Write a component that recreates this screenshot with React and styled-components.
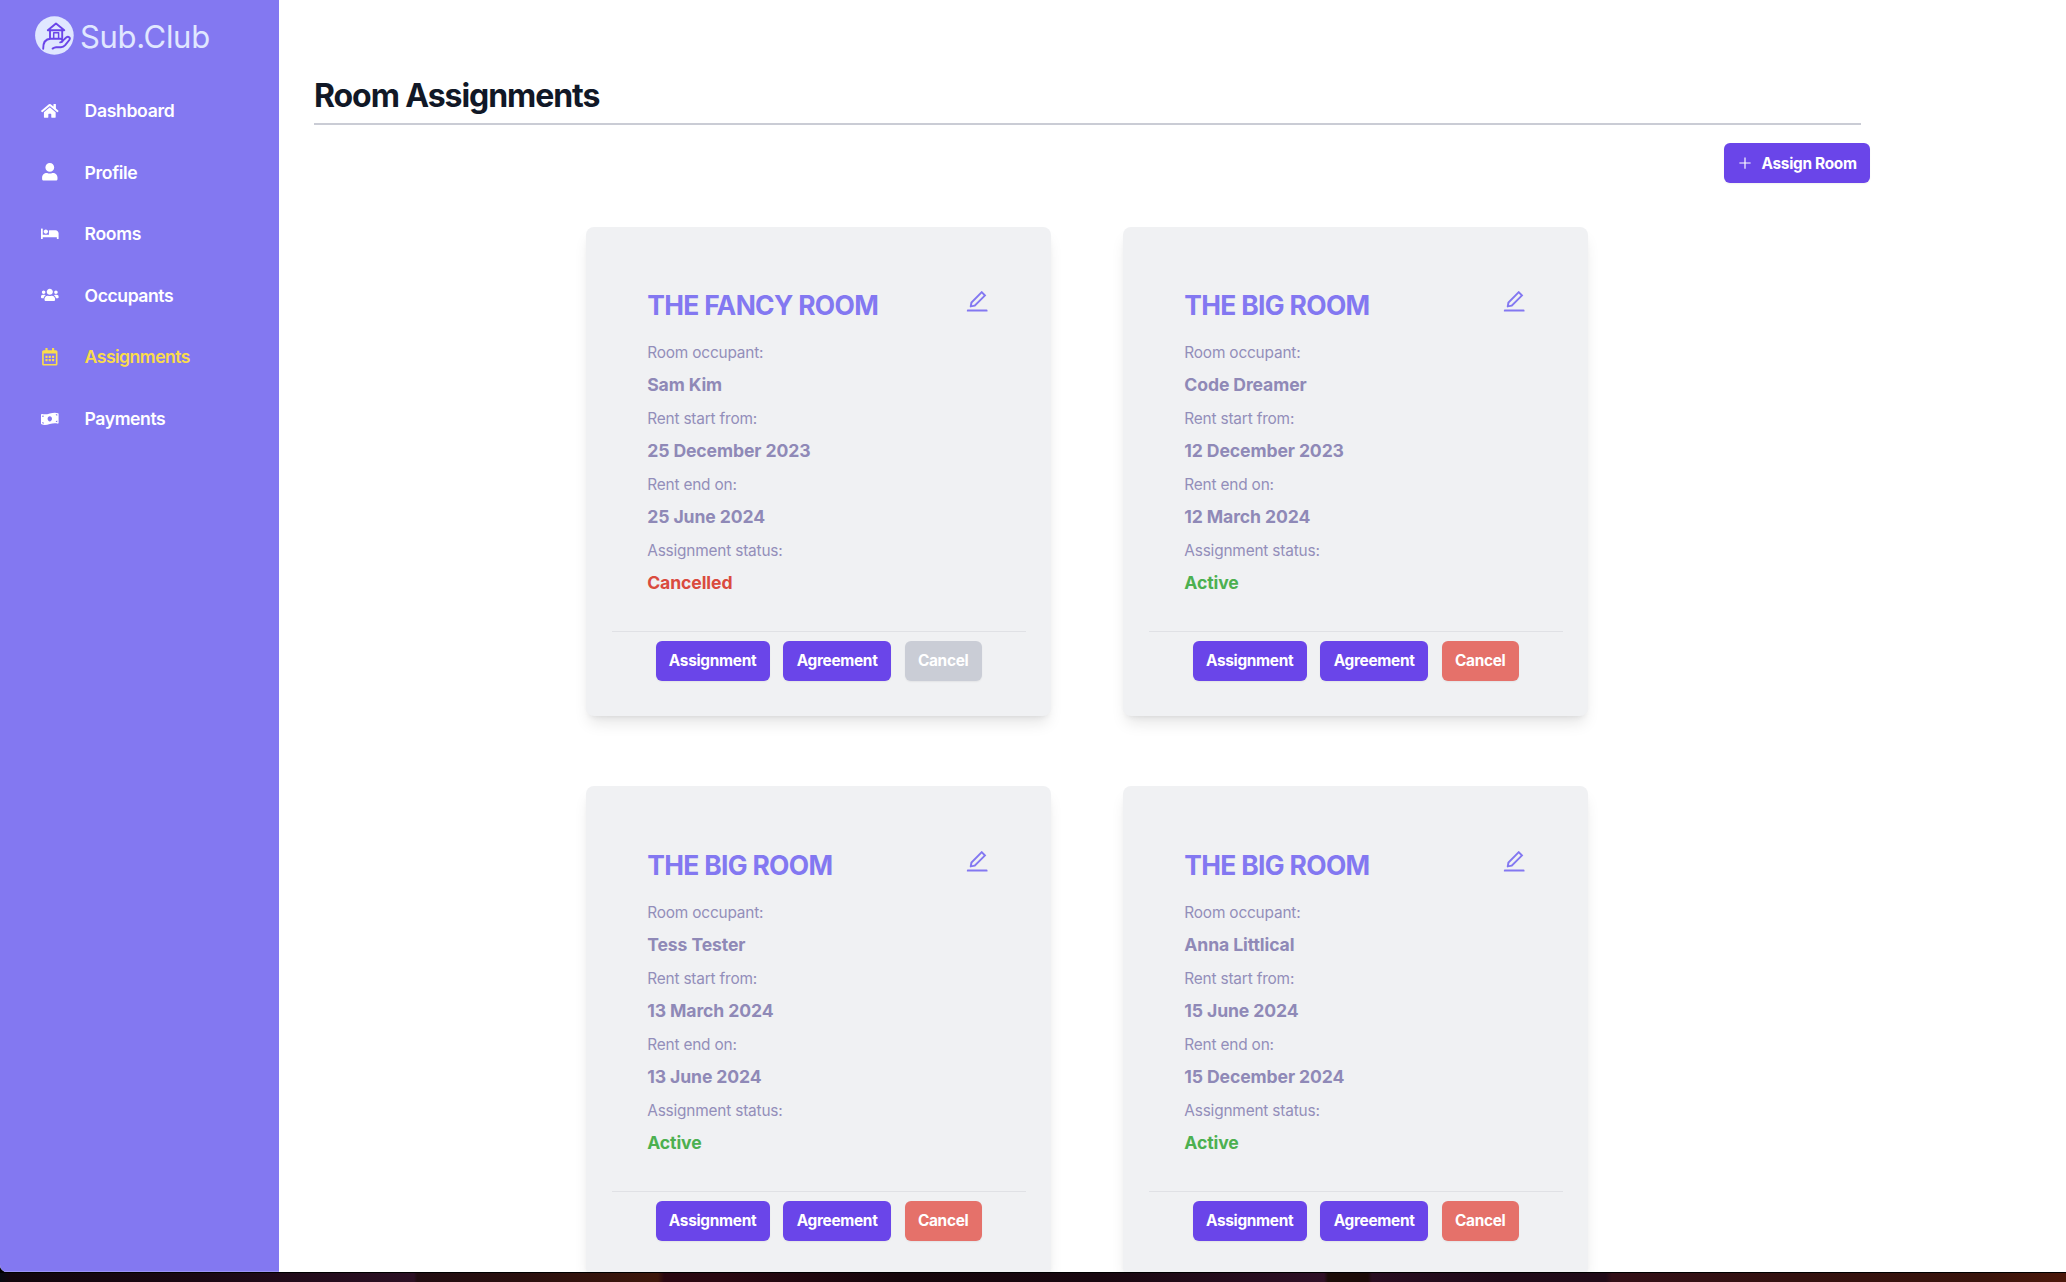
import React from 'react';
import styled, { createGlobalStyle } from 'styled-components';
import { FaHome, FaUser, FaBed, FaUsers, FaRegCalendarAlt, FaMoneyBillWave } from 'react-icons/fa';
import { AiOutlineEdit, AiOutlinePlus } from 'react-icons/ai';

const GlobalStyle = createGlobalStyle`
  *, *::before, *::after { box-sizing: border-box; }
  body { margin: 0; overflow: hidden; background: #000; font-family: Inter, 'Liberation Sans', sans-serif; }
  h1, h2, p, ul { margin: 0; padding: 0; }
`;

const Screen = styled.div`
  height: 1282px;
  display: flex;
  flex-direction: column;
  background: #000;
`;

const Window = styled.div`
  height: 1272px;
  flex: none;
  display: flex;
  overflow: hidden;
  background: #fff;
  border-bottom-left-radius: 7px;
`;

const Desktop = styled.div`
  flex: 1;
  margin-top: 1px;
  background: linear-gradient(
    90deg,
    #060a10 0, #12060c 10px, #1a0813 200px, #2c1024 414px,
    #220d12 417px, #2a0f0e 520px, #3e170b 658px,
    #2a0710 664px, #2a0811 720px, #16060b 900px, #18070f 1100px, #2f1026 1324px,
    #1c0c08 1328px, #1c0a08 1368px,
    #280d20 1372px, #200a18 1500px, #210b18 1606px,
    #330f17 1612px, #34110f 1800px, #3a140c 1980px, #4c180b 2066px
  );
`;

const Sidebar = styled.aside`
  width: 279px;
  flex: none;
  background: #8378f1;
  border-bottom: 1px solid #9d94f5;
`;

const Logo = styled.div`
  height: 79.7px;
  padding: 16px 0 0 35px;
  display: flex;
  align-items: flex-start;
  gap: 6px;
  color: #e0e7ff;

  svg { display: block; flex: none; }
`;

const LogoName = styled.span`
  padding-top: 1px;
  font-size: 31px;
  font-weight: 400;
  letter-spacing: -0.3px;
  line-height: 40px;
`;

const NavItem = styled.li`
  height: 61.6px;
  padding-left: 41px;
  display: flex;
  align-items: center;
  gap: 26px;
  list-style: none;
  color: ${({ $active }) => ($active ? '#fadc4b' : '#fff')};
  font-size: 17.6px;
  font-weight: 600;
  letter-spacing: ${({ $spacing }) => $spacing}px;

  svg { flex: none; }
`;

const Main = styled.main`
  flex: 1;
  padding-left: 35px;
`;

const PageHeader = styled.header`
  width: 1547px;
  height: 125px;
  padding-top: 75px;
  border-bottom: 2px solid #caccd5;
`;

const PageTitle = styled.h1`
  font-size: 32px;
  font-weight: 700;
  line-height: 42px;
  letter-spacing: -1.07px;
  color: #111827;
`;

const Toolbar = styled.div`
  width: 1556px;
  padding-top: 18px;
  display: flex;
  justify-content: flex-end;
`;

const BUTTON_COLORS = { primary: '#6a45e9', danger: '#e5716a', disabled: '#cacdd6' };

const Button = styled.button`
  height: 40px;
  padding: 0 13.3px;
  display: inline-flex;
  align-items: center;
  gap: 8.4px;
  border: 0;
  border-radius: 6px;
  background: ${({ $tone }) => BUTTON_COLORS[$tone]};
  color: #fff;
  font-family: inherit;
  font-size: 15.4px;
  font-weight: 700;
  letter-spacing: -0.3px;
  box-shadow: 0 1px 2px rgba(0, 0, 0, 0.06);
`;

const CardGrid = styled.section`
  padding: 43.6px 0 0 271.8px;
  display: grid;
  grid-template-columns: 465.6px 465.6px;
  gap: 70.7px 71.5px;
`;

const Card = styled.article`
  height: 489px;
  border-radius: 8px;
  background: #f0f1f3;
  box-shadow: 0 10px 15px -3px rgba(0, 0, 0, 0.1), 0 4px 6px -4px rgba(0, 0, 0, 0.1);
`;

const CardBody = styled.div`
  padding: 61.4px 61.4px 0;
`;

const CardHead = styled.div`
  height: 48px;
  display: flex;
  justify-content: space-between;
  align-items: flex-start;
  color: #8378f1;
`;

const RoomName = styled.h2`
  font-size: 26.4px;
  font-weight: 700;
  line-height: 34px;
  letter-spacing: -0.66px;
  text-transform: uppercase;
`;

const Label = styled.p`
  font-size: 15.4px;
  line-height: 33px;
  letter-spacing: -0.18px;
  color: #938eba;
`;

const STATUS_COLORS = { Active: '#4cb050', Cancelled: '#da4b3e' };

const Value = styled.p`
  margin-bottom: 2px;
  font-size: 17.6px;
  font-weight: 700;
  line-height: 31px;
  letter-spacing: -0.1px;
  color: ${({ $status }) => STATUS_COLORS[$status] || '#8f89b7'};
`;

const CardActions = styled.footer`
  margin: 33px 25.8px 0;
  padding-top: 9px;
  border-top: 1px solid #e0e1e5;
  display: flex;
  justify-content: center;
  gap: 13.8px;
`;

const NAV = [
  { label: 'Dashboard', Icon: FaHome, spacing: -0.34 },
  { label: 'Profile', Icon: FaUser, spacing: -0.35 },
  { label: 'Rooms', Icon: FaBed, spacing: -0.35 },
  { label: 'Occupants', Icon: FaUsers, spacing: -0.44 },
  { label: 'Assignments', Icon: FaRegCalendarAlt, spacing: -0.52, active: true },
  { label: 'Payments', Icon: FaMoneyBillWave, spacing: -0.42 },
];

const ASSIGNMENTS = [
  { room: 'The Fancy Room', occupant: 'Sam Kim', start: '25 December 2023', end: '25 June 2024', status: 'Cancelled' },
  { room: 'The Big Room', occupant: 'Code Dreamer', start: '12 December 2023', end: '12 March 2024', status: 'Active' },
  { room: 'The Big Room', occupant: 'Tess Tester', start: '13 March 2024', end: '13 June 2024', status: 'Active' },
  { room: 'The Big Room', occupant: 'Anna Littlical', start: '15 June 2024', end: '15 December 2024', status: 'Active' },
];

function LogoMark() {
  return (
    <svg width="39" height="39" viewBox="0 0 39 39" fill="none" stroke="#6a45e9" strokeWidth="1.9" strokeLinecap="round" strokeLinejoin="round">
      <circle cx="19.4" cy="19.5" r="19.3" fill="#e0e7ff" stroke="none" />
      <path d="M12.8 14.2 L21 7.6 L29.3 14.2 Z" />
      <path d="M15 14.5 V22 M27.2 14.5 V22" />
      <path d="M18.7 21.8 V16.8 H23.6 V21.8" strokeWidth="1.5" />
      <path d="M8.2 32.8 C8 26.5 10.4 22.9 15.6 22.7 H25.2 C28.4 22.9 28.2 26.3 25.2 26.4" />
      <path d="M26.5 25.9 L31.2 21.5 C33.4 19.8 35.8 21.7 34.3 24 L30.2 29.2 C28.9 30.7 27.8 31.2 26 31.2 H21.2 C19.8 31.3 18.9 31.7 17.6 32.6" />
    </svg>
  );
}

function AssignmentCard({ room, occupant, start, end, status }) {
  return (
    <Card>
      <CardBody>
        <CardHead>
          <RoomName>{room}</RoomName>
          <AiOutlineEdit size={26.4} />
        </CardHead>
        <Label>Room occupant:</Label>
        <Value>{occupant}</Value>
        <Label>Rent start from:</Label>
        <Value>{start}</Value>
        <Label>Rent end on:</Label>
        <Value>{end}</Value>
        <Label>Assignment status:</Label>
        <Value $status={status}>{status}</Value>
      </CardBody>
      <CardActions>
        <Button $tone="primary">Assignment</Button>
        <Button $tone="primary">Agreement</Button>
        <Button $tone={status === 'Active' ? 'danger' : 'disabled'}>Cancel</Button>
      </CardActions>
    </Card>
  );
}

export default function App() {
  return (
    <Screen>
      <GlobalStyle />
      <Window>
        <Sidebar>
          <Logo>
            <LogoMark />
            <LogoName>Sub.Club</LogoName>
          </Logo>
          <ul>
            {NAV.map(({ label, Icon, active, spacing }) => (
              <NavItem key={label} $active={active} $spacing={spacing}>
                <Icon size={17.6} />
                {label}
              </NavItem>
            ))}
          </ul>
        </Sidebar>
        <Main>
          <PageHeader>
            <PageTitle>Room Assignments</PageTitle>
          </PageHeader>
          <Toolbar>
            <Button $tone="primary">
              <AiOutlinePlus size={16} />
              Assign Room
            </Button>
          </Toolbar>
          <CardGrid>
            {ASSIGNMENTS.map((item, index) => (
              <AssignmentCard key={index} {...item} />
            ))}
          </CardGrid>
        </Main>
      </Window>
      <Desktop />
    </Screen>
  );
}
